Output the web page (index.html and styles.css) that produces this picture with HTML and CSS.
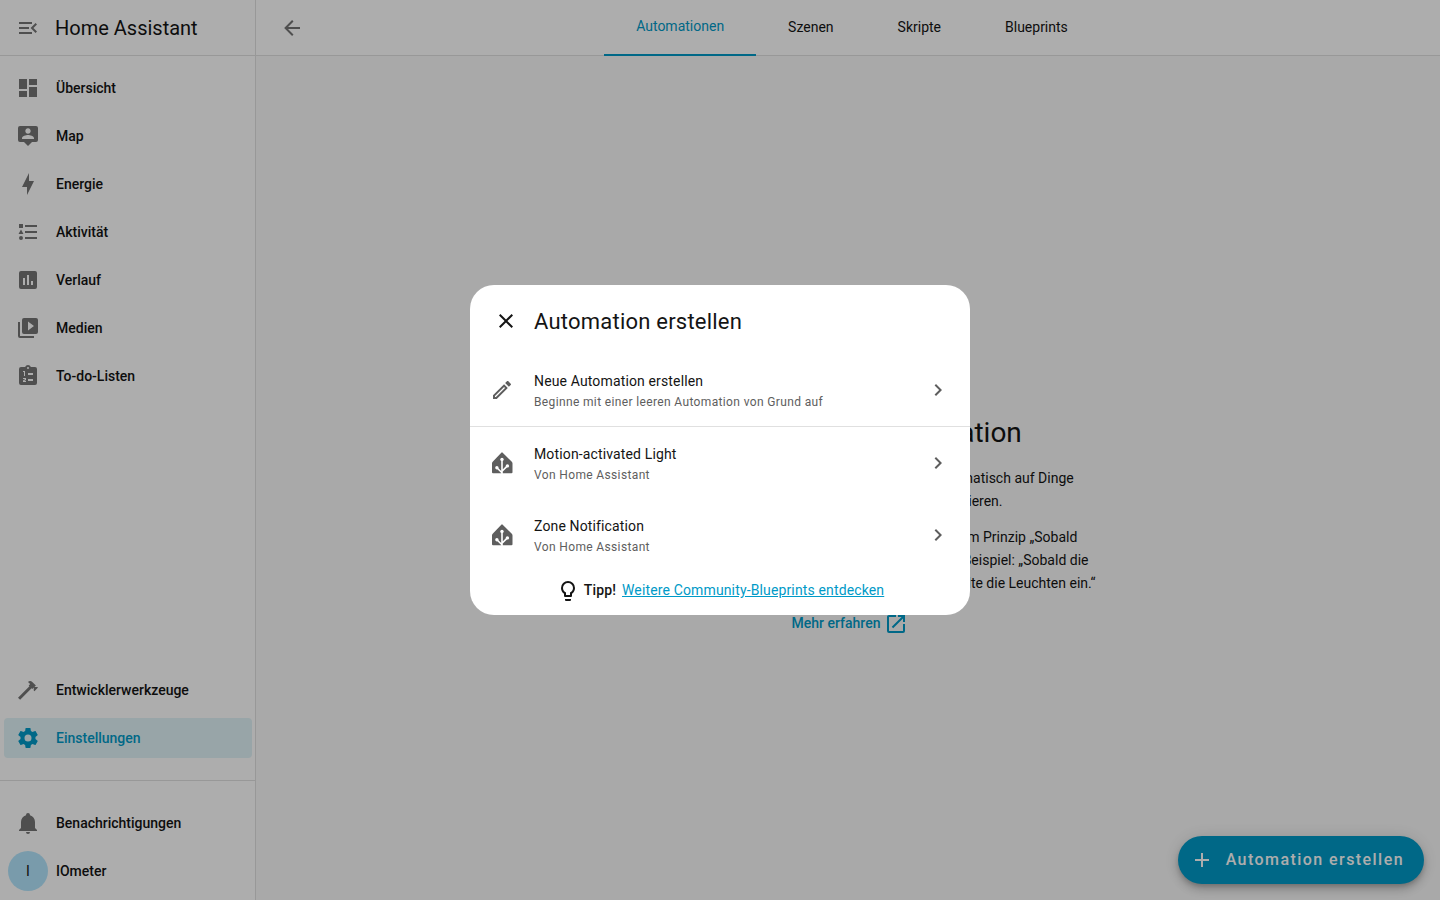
FILE: index.html
```html
<!DOCTYPE html>
<html lang="de">
<head>
    <meta charset="UTF-8">
    <meta name="viewport" content="width=device-width, initial-scale=1.0">
    <title>Automationen – Home Assistant</title>
    <link rel="stylesheet" href="styles.css">
</head>
<body>
    <div class="app">
        <aside class="sidebar">
            <div class="sidebar-header">
                <button class="icon-button" aria-label="Seitenleiste umschalten">
                    <svg class="icon" viewBox="0 0 24 24"><path d="M21,15.61L19.59,17L14.58,12L19.59,7L21,8.39L17.44,12L21,15.61M3,6H16V8H3V6M3,13V11H13V13H3M3,18V16H16V18H3Z"/></svg>
                </button>
                <span class="sidebar-title">Home Assistant</span>
            </div>
            <nav class="sidebar-nav">
                <a class="nav-item" href="#">
                    <svg class="icon" viewBox="0 0 24 24"><path d="M13,3V9H21V3M13,21H21V11H13M3,21H11V15H3M3,13H11V3H3V13Z"/></svg>
                    <span>Übersicht</span>
                </a>
                <a class="nav-item" href="#">
                    <svg class="icon" viewBox="0 0 24 24"><path fill-rule="evenodd" d="M20,2H4A2,2 0 0,0 2,4V16A2,2 0 0,0 4,18H8L12,22L16,18H20A2,2 0 0,0 22,16V4A2,2 0 0,0 20,2M12,4.3C13.5,4.3 14.7,5.5 14.7,7C14.7,8.5 13.5,9.7 12,9.7C10.5,9.7 9.3,8.5 9.3,7C9.3,5.5 10.5,4.3 12,4.3M18,15H6V14.1C6,12.1 10,11 12,11C14,11 18,12.1 18,14.1V15Z"/></svg>
                    <span>Map</span>
                </a>
                <a class="nav-item" href="#">
                    <svg class="icon" viewBox="0 0 24 24"><path d="M11 15H6L13 1V9H18L11 23V15Z"/></svg>
                    <span>Energie</span>
                </a>
                <a class="nav-item" href="#">
                    <svg class="icon" viewBox="0 0 24 24"><path d="M5,9.5L7.5,14H2.5L5,9.5M3,4H7V8H3V4M5,20A2,2 0 0,0 7,18A2,2 0 0,0 5,16A2,2 0 0,0 3,18A2,2 0 0,0 5,20M9,5V7H21V5H9M9,19H21V17H9V19M9,13H21V11H9V13Z"/></svg>
                    <span>Aktivität</span>
                </a>
                <a class="nav-item" href="#">
                    <svg class="icon" viewBox="0 0 24 24"><path fill-rule="evenodd" d="M9,17H7V10H9V17M13,17H11V7H13V17M17,17H15V13H17V17M19,3H5A2,2 0 0,0 3,5V19A2,2 0 0,0 5,21H19A2,2 0 0,0 21,19V5A2,2 0 0,0 19,3Z"/></svg>
                    <span>Verlauf</span>
                </a>
                <a class="nav-item" href="#">
                    <svg class="icon" viewBox="0 0 24 24"><path fill-rule="evenodd" d="M4,6H2V20A2,2 0 0,0 4,22H18V20H4V6M20,2H8A2,2 0 0,0 6,4V16A2,2 0 0,0 8,18H20A2,2 0 0,0 22,16V4A2,2 0 0,0 20,2M12,14.5V5.5L18,10L12,14.5Z"/></svg>
                    <span>Medien</span>
                </a>
                <a class="nav-item" href="#">
                    <svg class="icon" viewBox="0 0 24 24"><path fill-rule="evenodd" d="M19,3H14.82C14.4,1.84 13.3,1 12,1C10.7,1 9.6,1.84 9.18,3H5A2,2 0 0,0 3,5V19A2,2 0 0,0 5,21H19A2,2 0 0,0 21,19V5A2,2 0 0,0 19,3M12,3A1,1 0 0,1 13,4A1,1 0 0,1 12,5A1,1 0 0,1 11,4A1,1 0 0,1 12,3M7,7H9V12H8V8H7V7M12,9H17V11H12V9M12,15H17V17H12V15M7,14H10V16L8.2,17H10V18H7V16.5L9,15.3V15H7V14Z"/></svg>
                    <span>To-do-Listen</span>
                </a>
                <a class="nav-item nav-item-bottom" href="#">
                    <svg class="icon" viewBox="0 0 24 24"><path d="M2,19.63L13.43,8.2L12.72,7.5L14.14,6.07L12,3.89C13.2,2.7 15.09,2.7 16.27,3.89L19.87,7.5L18.45,8.91H21.29L22,9.62L18.45,13.21L17.74,12.5V9.62L16.27,11.04L15.56,10.33L4.13,21.76L2,19.63Z"/></svg>
                    <span>Entwicklerwerkzeuge</span>
                </a>
                <a class="nav-item active" href="#" aria-current="page">
                    <svg class="icon" viewBox="0 0 24 24"><path d="M12,15.5A3.5,3.5 0 0,1 8.5,12A3.5,3.5 0 0,1 12,8.5A3.5,3.5 0 0,1 15.5,12A3.5,3.5 0 0,1 12,15.5M19.43,12.97C19.47,12.65 19.5,12.33 19.5,12C19.5,11.67 19.47,11.34 19.43,11L21.54,9.37C21.73,9.22 21.78,8.95 21.66,8.73L19.66,5.27C19.54,5.05 19.27,4.96 19.05,5.05L16.56,6.05C16.04,5.66 15.5,5.32 14.87,5.07L14.5,2.42C14.46,2.18 14.25,2 14,2H10C9.75,2 9.54,2.18 9.5,2.42L9.13,5.07C8.5,5.32 7.96,5.66 7.44,6.05L4.95,5.05C4.73,4.96 4.46,5.05 4.34,5.27L2.34,8.73C2.21,8.95 2.27,9.22 2.46,9.37L4.57,11C4.53,11.34 4.5,11.67 4.5,12C4.5,12.33 4.53,12.65 4.57,12.97L2.46,14.63C2.27,14.78 2.21,15.05 2.34,15.27L4.34,18.73C4.46,18.95 4.73,19.03 4.95,18.95L7.44,17.94C7.96,18.34 8.5,18.68 9.13,18.93L9.5,21.58C9.54,21.82 9.75,22 10,22H14C14.25,22 14.46,21.82 14.5,21.58L14.87,18.93C15.5,18.67 16.04,18.34 16.56,17.94L19.05,18.95C19.27,19.03 19.54,18.95 19.66,18.73L21.66,15.27C21.78,15.05 21.73,14.78 21.54,14.63L19.43,12.97Z"/></svg>
                    <span>Einstellungen</span>
                </a>
            </nav>
            <div class="sidebar-footer">
                <a class="nav-item" href="#">
                    <svg class="icon" viewBox="0 0 24 24"><path d="M21,19V20H3V19L5,17V11C5,7.9 7.03,5.17 10,4.29C10,4.19 10,4.1 10,4A2,2 0 0,1 12,2A2,2 0 0,1 14,4C14,4.1 14,4.19 14,4.29C16.97,5.17 19,7.9 19,11V17L21,19M14,21A2,2 0 0,1 12,23A2,2 0 0,1 10,21"/></svg>
                    <span>Benachrichtigungen</span>
                </a>
                <a class="nav-item nav-user" href="#">
                    <span class="avatar">I</span>
                    <span>IOmeter</span>
                </a>
            </div>
        </aside>

        <main class="main">
            <header class="toolbar">
                <button class="icon-button" aria-label="Zurück">
                    <svg class="icon" viewBox="0 0 24 24"><path d="M20,11V13H8L13.5,18.5L12.08,19.92L4.16,12L12.08,4.08L13.5,5.5L8,11H20Z"/></svg>
                </button>
                <nav class="tabs">
                    <a class="tab active" href="#">Automationen</a>
                    <a class="tab" href="#">Szenen</a>
                    <a class="tab" href="#">Skripte</a>
                    <a class="tab" href="#">Blueprints</a>
                </nav>
            </header>
            <section class="empty">
                <h1>Beginne mit der Automation</h1>
                <p>Durch Automationen erlaubst du Home Assistant, automatisch auf Dinge<br>in und um dein eigenes Zuhause herum reagieren.</p>
                <p>Automationen verbinden Auslöser und Aktionen nach dem Prinzip „Sobald<br>Auslöser, dann Aktion ausführen“ stets miteinander. Zum Beispiel: „Sobald die<br>Bewegung im Flur über den Sensor erkannt wird, dann schalte die Leuchten ein.“</p>
                <a class="learn-more" href="#">
                    Mehr erfahren
                    <svg class="icon" viewBox="0 0 24 24"><path d="M14,3V5H17.59L7.76,14.83L9.17,16.24L19,6.41V10H21V3M19,19H5V5H12V3H5C3.89,3 3,3.9 3,5V19A2,2 0 0,0 5,21H19A2,2 0 0,0 21,19V12H19V19Z"/></svg>
                </a>
            </section>
            <button class="fab">
                <svg class="icon" viewBox="0 0 24 24"><path d="M19,13H13V19H11V13H5V11H11V5H13V11H19V13Z"/></svg>
                Automation erstellen
            </button>
        </main>
    </div>

    <div class="scrim">
        <div class="dialog" role="dialog" aria-modal="true" aria-labelledby="dialog-title">
            <header class="dialog-header">
                <button class="icon-button" aria-label="Schließen">
                    <svg class="icon" viewBox="0 0 24 24"><path d="M19,6.41L17.59,5L12,10.59L6.41,5L5,6.41L10.59,12L5,17.59L6.41,19L12,13.41L17.59,19L19,17.59L13.41,12L19,6.41Z"/></svg>
                </button>
                <h2 id="dialog-title">Automation erstellen</h2>
            </header>
            <button class="option">
                <svg class="icon" viewBox="0 0 24 24"><path d="M14.06,9L15,9.94L5.92,19H5V18.08L14.06,9M17.66,3C17.41,3 17.15,3.1 16.96,3.29L15.13,5.12L18.88,8.87L20.71,7.04C21.1,6.65 21.1,6 20.71,5.63L18.37,3.29C18.17,3.09 17.92,3 17.66,3M14.06,6.19L3,17.25V21H6.75L17.81,9.94L14.06,6.19Z"/></svg>
                <span class="option-text">
                    <span class="option-title">Neue Automation erstellen</span>
                    <span class="option-info">Beginne mit einer leeren Automation von Grund auf</span>
                </span>
                <svg class="icon" viewBox="0 0 24 24"><path d="M8.59,16.58L13.17,12L8.59,7.41L10,6L16,12L10,18L8.59,16.58Z"/></svg>
            </button>
            <hr class="divider">
            <button class="option">
                <svg class="icon" viewBox="0 0 24 24">
                    <path d="M12.7,1.7L21.8,10.8Q22.5,11.5 22.5,12.5V21.2Q22.5,22.2 21.5,22.2H3Q2,22.2 2,21.2V12.5Q2,11.5 2.7,10.8L11.3,1.7Q12,1 12.7,1.7Z"/>
                    <path class="branch" d="M12,8.4V23M6.9,16.7L12,21.8M17.4,14.9L12,20.3"/>
                    <g class="node"><circle cx="12" cy="8.4" r="1.7"/><circle cx="6.9" cy="16.7" r="1.7"/><circle cx="17.4" cy="14.9" r="1.7"/></g>
                </svg>
                <span class="option-text">
                    <span class="option-title">Motion-activated Light</span>
                    <span class="option-info">Von Home Assistant</span>
                </span>
                <svg class="icon" viewBox="0 0 24 24"><path d="M8.59,16.58L13.17,12L8.59,7.41L10,6L16,12L10,18L8.59,16.58Z"/></svg>
            </button>
            <button class="option">
                <svg class="icon" viewBox="0 0 24 24">
                    <path d="M12.7,1.7L21.8,10.8Q22.5,11.5 22.5,12.5V21.2Q22.5,22.2 21.5,22.2H3Q2,22.2 2,21.2V12.5Q2,11.5 2.7,10.8L11.3,1.7Q12,1 12.7,1.7Z"/>
                    <path class="branch" d="M12,8.4V23M6.9,16.7L12,21.8M17.4,14.9L12,20.3"/>
                    <g class="node"><circle cx="12" cy="8.4" r="1.7"/><circle cx="6.9" cy="16.7" r="1.7"/><circle cx="17.4" cy="14.9" r="1.7"/></g>
                </svg>
                <span class="option-text">
                    <span class="option-title">Zone Notification</span>
                    <span class="option-info">Von Home Assistant</span>
                </span>
                <svg class="icon" viewBox="0 0 24 24"><path d="M8.59,16.58L13.17,12L8.59,7.41L10,6L16,12L10,18L8.59,16.58Z"/></svg>
            </button>
            <div class="tip">
                <svg class="icon" viewBox="0 0 24 24"><path d="M12,2A7,7 0 0,1 19,9C19,11.38 17.81,13.47 16,14.74V17A1,1 0 0,1 15,18H9A1,1 0 0,1 8,17V14.74C6.19,13.47 5,11.38 5,9A7,7 0 0,1 12,2M9,21V20H15V21A1,1 0 0,1 14,22H10A1,1 0 0,1 9,21M12,4A5,5 0 0,0 7,9C7,11.05 8.23,12.81 10,13.58V16H14V13.58C15.77,12.81 17,11.05 17,9A5,5 0 0,0 12,4Z"/></svg>
                <strong>Tipp!</strong>
                <a href="#">Weitere Community-Blueprints entdecken</a>
            </div>
        </div>
    </div>
</body>
</html>
```
FILE: styles.css
```css
:root {
    --primary: #009ac7;
    --text: #141414;
    --secondary: #5e5e5e;
    --sidebar-icon: #757575;
    --divider: #e0e0e0;
}

* {
    box-sizing: border-box;
}

body {
    margin: 0;
    font-family: Roboto, "Noto Sans", sans-serif;
    font-size: 14px;
    line-height: 22px;
    color: var(--text);
    background-color: #fafafa;
}

a {
    color: var(--primary);
}

button {
    padding: 0;
    border: none;
    background: none;
    font: inherit;
    color: inherit;
    cursor: pointer;
}

.icon {
    display: block;
    flex: none;
    width: 24px;
    height: 24px;
    fill: currentColor;
}

.icon-button {
    display: flex;
    align-items: center;
    justify-content: center;
    width: 48px;
    height: 48px;
}

.app {
    display: flex;
    height: 100vh;
}

/* Sidebar */
.sidebar {
    display: flex;
    flex-direction: column;
    flex: none;
    width: 256px;
    background-color: #fff;
    border-right: 1px solid var(--divider);
}

.sidebar-header {
    display: flex;
    align-items: center;
    gap: 3px;
    height: 56px;
    padding-left: 4px;
    border-bottom: 1px solid var(--divider);
    color: var(--sidebar-icon);
}

.sidebar-title {
    font-size: 20px;
    color: var(--text);
}

.sidebar-nav {
    display: flex;
    flex: 1;
    flex-direction: column;
    gap: 8px;
    padding: 12px 3px 22px 4px;
}

.nav-item {
    display: flex;
    align-items: center;
    gap: 16px;
    height: 40px;
    padding: 0 12px;
    border-radius: 4px;
    font-weight: 500;
    color: var(--text);
    text-decoration: none;
}

.nav-item .icon {
    color: var(--sidebar-icon);
}

.nav-item-bottom {
    margin-top: auto;
}

.nav-item.active {
    color: var(--primary);
    background-color: rgba(0, 154, 199, 0.12);
}

.nav-item.active .icon {
    color: var(--primary);
}

.sidebar-footer {
    display: flex;
    flex-direction: column;
    gap: 8px;
    padding: 22px 4px 9px;
    border-top: 1px solid var(--divider);
}

.nav-user {
    gap: 8px;
    padding: 0 4px;
}

.avatar {
    display: flex;
    align-items: center;
    justify-content: center;
    width: 40px;
    height: 40px;
    border-radius: 50%;
    font-weight: 400;
    color: var(--text);
    background-color: #b3e5fc;
}

/* Main panel */
.main {
    display: flex;
    flex: 1;
    flex-direction: column;
}

.toolbar {
    display: flex;
    align-items: center;
    height: 56px;
    padding: 0 4px 0 12px;
    border-bottom: 1px solid var(--divider);
    background-color: #fff;
    color: var(--sidebar-icon);
}

.tabs {
    display: flex;
    flex: 1;
    align-self: stretch;
    justify-content: center;
    margin-right: 48px;
}

.tab {
    display: flex;
    align-items: center;
    height: 56px;
    padding: 0 32px 2px;
    color: var(--text);
    text-decoration: none;
}

.tab.active {
    border-bottom: 2px solid var(--primary);
    color: var(--primary);
}

.empty {
    display: flex;
    flex: 1;
    flex-direction: column;
    align-items: center;
    justify-content: center;
    padding-top: 158px;
    line-height: 23px;
    text-align: center;
}

.empty h1 {
    margin: 0 0 16px;
    font-size: 28px;
    font-weight: 400;
    line-height: 36px;
}

.empty p {
    margin: 0 0 13px;
}

.learn-more {
    display: flex;
    align-items: center;
    gap: 4px;
    margin-top: 4px;
    padding-left: 4px;
    font-weight: 500;
    text-decoration: none;
}

.fab {
    display: flex;
    align-items: center;
    align-self: flex-end;
    gap: 12px;
    height: 48px;
    margin: 0 16px 16px 0;
    padding: 0 20px 0 12px;
    border-radius: 24px;
    font-size: 16px;
    font-weight: 500;
    line-height: 24px;
    letter-spacing: 0.09em;
    color: #fff;
    background-color: var(--primary);
    box-shadow: 0 3px 5px -1px rgba(0, 0, 0, 0.2), 0 6px 10px rgba(0, 0, 0, 0.14), 0 1px 18px rgba(0, 0, 0, 0.12);
}

/* Dialog */
.scrim {
    position: fixed;
    inset: 0;
    display: flex;
    align-items: center;
    justify-content: center;
    background-color: rgba(0, 0, 0, 0.32);
}

.dialog {
    width: 500px;
    max-width: 90vw;
    border-radius: 24px;
    overflow: hidden;
    background-color: #fff;
}

.dialog-header {
    display: flex;
    align-items: center;
    gap: 4px;
    padding: 12px 12px 9px;
}

.dialog-header h2 {
    margin: 0;
    padding-top: 2px;
    font-size: 22px;
    font-weight: 400;
    line-height: 28px;
    letter-spacing: 0.01em;
}

.option {
    display: flex;
    align-items: center;
    gap: 20px;
    width: 100%;
    height: 72px;
    padding: 0 20px;
    text-align: left;
    color: var(--secondary);
}

.option-text {
    flex: 1;
    padding-top: 2px;
}

.option-title,
.option-info {
    display: block;
}

.option-title {
    color: var(--text);
    letter-spacing: 0.01em;
}

.option-info {
    font-size: 12px;
    line-height: 20px;
    letter-spacing: 0.03em;
}

.divider {
    margin: 0;
    border: none;
    border-top: 1px solid var(--divider);
}

.branch {
    fill: none;
    stroke: #fff;
    stroke-width: 1.6;
}

.node {
    fill: #fff;
}

.tip {
    display: flex;
    align-items: flex-start;
    justify-content: center;
    gap: 4px;
    padding: 8px 16px 12px;
    letter-spacing: 0.01em;
}

.tip strong {
    margin-right: 2px;
    font-weight: 500;
}
```
